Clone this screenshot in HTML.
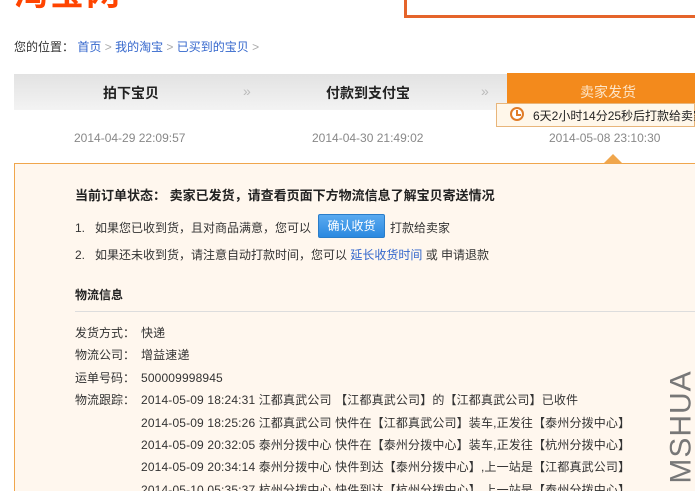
<!DOCTYPE html>
<html style="margin:0;width:695px;height:491px;overflow:hidden"><head><meta charset="utf-8"><style>
body{margin:0;width:695px;height:491px;overflow:hidden;background:#fff;font-family:"Liberation Sans","Noto Sans CJK SC",sans-serif;font-size:12px;color:#333;position:relative}
.a{position:absolute;white-space:nowrap}
a{color:#36c;text-decoration:none}
</style></head><body>
<div class="a" style="left:14px;top:-34px;font-size:34px;font-weight:bold;color:#f40;letter-spacing:2px">淘宝网</div>
<div class="a" style="left:404px;top:-5px;width:288px;height:17px;border:3px solid #e5642a;"></div>
<div class="a" style="left:14px;top:38px;color:#333">您的位置： <span style="color:#36c">首页</span> <span style="color:#aaa">&gt;</span> <span style="color:#36c">我的淘宝</span> <span style="color:#aaa">&gt;</span> <span style="color:#36c">已买到的宝贝</span> <span style="color:#aaa">&gt;</span></div>
<div class="a" style="left:14px;top:74px;width:493px;height:36px;background:linear-gradient(#e2e2e2,#f3f3f3)"></div>
<div class="a" style="left:103px;top:83px;font-size:14px;font-weight:bold;color:#222">拍下宝贝</div>
<div class="a" style="left:243px;top:83px;font-size:14px;color:#bbb">»</div>
<div class="a" style="left:326px;top:83px;font-size:14px;font-weight:bold;color:#222">付款到支付宝</div>
<div class="a" style="left:481px;top:83px;font-size:14px;color:#bbb">»</div>
<div class="a" style="left:507px;top:73px;width:188px;height:37px;background:#f38a1c"></div>
<div class="a" style="left:580px;top:82px;font-size:14px;color:#fde5c8">卖家发货</div>
<div class="a" style="left:496px;top:103px;width:199px;height:24px;border:1px solid #e8b57a;background:#fff7ea;box-sizing:border-box"></div>
<div class="a" style="left:510px;top:107px;width:14px;height:14px;border:2px solid #e07c28;border-radius:50%;box-sizing:border-box;background:#fff"></div>
<div class="a" style="left:516px;top:110px;width:2px;height:5px;background:#e07c28"></div>
<div class="a" style="left:516px;top:114px;width:5px;height:2px;background:#e07c28"></div>
<div class="a" style="left:533px;top:107px;color:#222">6天2小时14分25秒后打款给卖家</div>
<div class="a" style="left:74px;top:131px;color:#888">2014-04-29 22:09:57</div>
<div class="a" style="left:312px;top:131px;color:#888">2014-04-30 21:49:02</div>
<div class="a" style="left:549px;top:131px;color:#888">2014-05-08 23:10:30</div>
<div class="a" style="left:14px;top:163px;width:690px;height:340px;border:1px solid #f0a64c;background:#fff7ee;box-sizing:border-box"></div>
<div class="a" style="left:604px;top:154px;width:0;height:0;border-left:9px solid transparent;border-right:9px solid transparent;border-bottom:9px solid #f0a64c"></div>
<div class="a" style="left:75px;top:185px;font-size:13px;font-weight:bold;color:#222">当前订单状态： 卖家已发货，请查看页面下方物流信息了解宝贝寄送情况</div>
<div class="a" style="left:75px;top:219px">1.&nbsp;&nbsp; 如果您已收到货，且对商品满意，您可以</div>
<div class="a" style="left:318px;top:214px;width:67px;height:24px;background:linear-gradient(#5aaaf0,#2b89e0);border:1px solid #2a7dc9;border-radius:2px;box-sizing:border-box;color:#fff;text-align:center;line-height:22px">确认收货</div>
<div class="a" style="left:390px;top:219px">打款给卖家</div>
<div class="a" style="left:75px;top:246px">2.&nbsp;&nbsp; 如果还未收到货，请注意自动打款时间，您可以 <a>延长收货时间</a> 或 申请退款</div>
<div class="a" style="left:75px;top:286px;font-weight:bold;color:#222">物流信息</div>
<div class="a" style="left:75px;top:311px;width:620px;height:1px;background:#ddd"></div>
<div class="a" style="left:75px;top:322px;line-height:22.4px">发货方式：<br>物流公司：<br>运单号码：<br>物流跟踪：</div>
<div class="a" style="left:141px;top:322px;line-height:22.4px;letter-spacing:0.15px">快递<br>增益速递<br>500009998945<br>2014-05-09 18:24:31 江都真武公司 【江都真武公司】的【江都真武公司】已收件<br>2014-05-09 18:25:26 江都真武公司 快件在【江都真武公司】装车,正发往【泰州分拨中心】<br>2014-05-09 20:32:05 泰州分拨中心 快件在【泰州分拨中心】装车,正发往【杭州分拨中心】<br>2014-05-09 20:34:14 泰州分拨中心 快件到达【泰州分拨中心】,上一站是【江都真武公司】<br>2014-05-10 05:35:37 杭州分拨中心 快件到达【杭州分拨中心】,上一站是【泰州分拨中心】</div>
<div class="a" style="left:625px;top:410px;transform:rotate(-90deg);font-size:30px;color:#777;letter-spacing:1px">MSHUA</div>
</body></html>
